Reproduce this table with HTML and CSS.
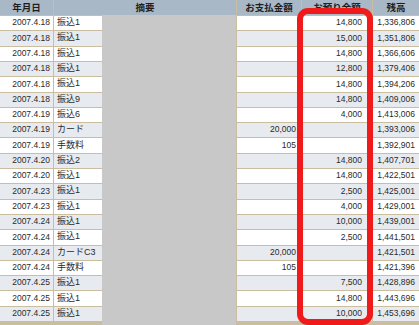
FILE: index.html
```html
<!DOCTYPE html>
<html lang="ja">
<head>
<meta charset="utf-8">
<link rel="stylesheet" href="styles.css">
</head>
<body>
<div class="wrap">
  <div class="ledger">
    <div class="h">年月日</div>
    <div class="h span2">摘要</div>
    <div class="h">お支払金額</div>
    <div class="h">お預り金額</div>
    <div class="h">残高</div>
    <div class="mask"></div>

    <div class="c d">2007.4.18</div><div class="c t">振込1</div><div class="c n pay"></div><div class="c n dep">14,800</div><div class="c n bal">1,336,806</div>
    <div class="c d s">2007.4.18</div><div class="c t s">振込1</div><div class="c n pay s"></div><div class="c n dep s">15,000</div><div class="c n bal s">1,351,806</div>
    <div class="c d">2007.4.18</div><div class="c t">振込1</div><div class="c n pay"></div><div class="c n dep">14,800</div><div class="c n bal">1,366,606</div>
    <div class="c d s">2007.4.18</div><div class="c t s">振込1</div><div class="c n pay s"></div><div class="c n dep s">12,800</div><div class="c n bal s">1,379,406</div>
    <div class="c d">2007.4.18</div><div class="c t">振込1</div><div class="c n pay"></div><div class="c n dep">14,800</div><div class="c n bal">1,394,206</div>
    <div class="c d s">2007.4.18</div><div class="c t s">振込9</div><div class="c n pay s"></div><div class="c n dep s">14,800</div><div class="c n bal s">1,409,006</div>
    <div class="c d">2007.4.19</div><div class="c t">振込6</div><div class="c n pay"></div><div class="c n dep">4,000</div><div class="c n bal">1,413,006</div>
    <div class="c d s">2007.4.19</div><div class="c t s">カード</div><div class="c n pay s">20,000</div><div class="c n dep s"></div><div class="c n bal s">1,393,006</div>
    <div class="c d">2007.4.19</div><div class="c t">手数料</div><div class="c n pay">105</div><div class="c n dep"></div><div class="c n bal">1,392,901</div>
    <div class="c d s">2007.4.20</div><div class="c t s">振込2</div><div class="c n pay s"></div><div class="c n dep s">14,800</div><div class="c n bal s">1,407,701</div>
    <div class="c d">2007.4.20</div><div class="c t">振込1</div><div class="c n pay"></div><div class="c n dep">14,800</div><div class="c n bal">1,422,501</div>
    <div class="c d s">2007.4.23</div><div class="c t s">振込1</div><div class="c n pay s"></div><div class="c n dep s">2,500</div><div class="c n bal s">1,425,001</div>
    <div class="c d">2007.4.23</div><div class="c t">振込1</div><div class="c n pay"></div><div class="c n dep">4,000</div><div class="c n bal">1,429,001</div>
    <div class="c d s">2007.4.24</div><div class="c t s">振込1</div><div class="c n pay s"></div><div class="c n dep s">10,000</div><div class="c n bal s">1,439,001</div>
    <div class="c d">2007.4.24</div><div class="c t">振込1</div><div class="c n pay"></div><div class="c n dep">2,500</div><div class="c n bal">1,441,501</div>
    <div class="c d s">2007.4.24</div><div class="c t s">カードC3</div><div class="c n pay s">20,000</div><div class="c n dep s"></div><div class="c n bal s">1,421,501</div>
    <div class="c d">2007.4.24</div><div class="c t">手数料</div><div class="c n pay">105</div><div class="c n dep"></div><div class="c n bal">1,421,396</div>
    <div class="c d s">2007.4.25</div><div class="c t s">振込1</div><div class="c n pay s"></div><div class="c n dep s">7,500</div><div class="c n bal s">1,428,896</div>
    <div class="c d">2007.4.25</div><div class="c t">振込1</div><div class="c n pay"></div><div class="c n dep">14,800</div><div class="c n bal">1,443,696</div>
    <div class="c d s">2007.4.25</div><div class="c t s">振込1</div><div class="c n pay s"></div><div class="c n dep s">10,000</div><div class="c n bal s">1,453,696</div>
  </div>
  <div class="highlight"></div>
</div>
</body>
</html>
```

FILE: styles.css
```css
html, body {
  margin: 0;
  padding: 0;
  background: #cbbd9f;
}
.wrap {
  position: relative;
  width: 419px;
  height: 325px;
  overflow: hidden;
}
.ledger {
  display: grid;
  grid-template-columns: 53px 48px 133px 64px 70px 1fr;
  grid-template-rows: 15px repeat(20, 1fr);
  gap: 1px;
  width: 419px;
  height: 325px;
  padding-bottom: 4px;
  box-sizing: border-box;
  background: #cbbd9f;
  font-family: "Liberation Sans", "Noto Sans CJK JP", sans-serif;
  font-size: 8.5px;
  color: #2a2a2a;
}
.h {
  background: #a9b8c7;
  font-family: "Noto Sans CJK JP", sans-serif;
  font-weight: 700;
  font-size: 9.5px;
  color: #1e1e1e;
  display: flex;
  align-items: center;
  justify-content: center;
  line-height: 1;
}
.span2 {
  grid-column: span 2;
}
.mask {
  grid-column: 3;
  grid-row: 2 / span 20;
  background: #c8c8c8;
  margin: -1px 0 -4px -1px;
}
.c {
  background: #ffffff;
  display: flex;
  align-items: center;
  line-height: 1;
  white-space: nowrap;
  padding-bottom: 1px;
}
.c.s {
  background: #e7ebef;
}
.d {
  justify-content: flex-end;
  padding-right: 3px;
}
.t {
  padding-left: 3px;
  font-family: "Liberation Sans", "Noto Sans CJK JP", sans-serif;
  font-size: 9px;
}
.n {
  justify-content: flex-end;
}
.pay {
  padding-right: 5px;
}
.dep {
  padding-right: 10px;
}
.bal {
  padding-right: 4px;
}
.highlight {
  position: absolute;
  left: 297px;
  top: 8px;
  width: 76px;
  height: 317px;
  box-sizing: border-box;
  border: 6px solid #f01a1a;
  border-radius: 11px;
}
```
